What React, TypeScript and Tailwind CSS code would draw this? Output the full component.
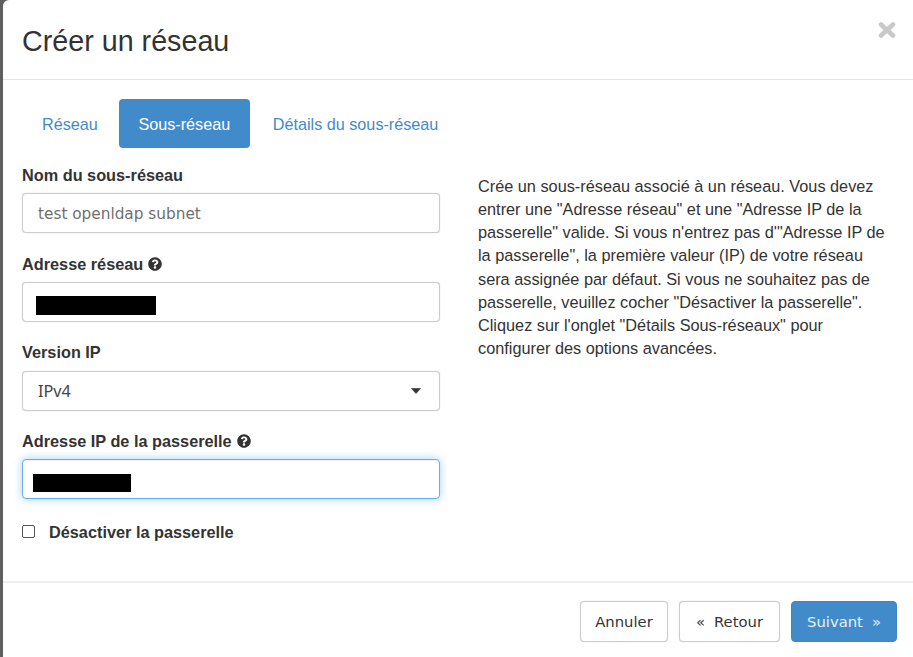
import React from "react";
import { FaQuestionCircle } from "react-icons/fa";

const labelCls = "block h-[22px] text-[16.3px] leading-[22px] font-bold text-[#333] font-['Liberation_Sans',sans-serif]";
const inputCls = "h-[40px] w-[418px] rounded-[4px] border border-[#ccc] shadow-[0_0_1px_rgba(0,0,0,0.25)] bg-white flex items-center font-['DejaVu_Sans',sans-serif] text-[15.3px]";

function Help() {
  return <FaQuestionCircle className="inline-block w-[14px] h-[14px] ml-[5px] align-[-1px] text-[#333]" />;
}

export default function App() {
  return (
    <div className="w-[913px] h-[657px] overflow-hidden bg-[#5f5f5f] pl-[3px]">
      <div className="w-[910px] h-[657px] bg-white rounded-tl-[6px] flex flex-col font-['Liberation_Sans',sans-serif] text-[#333]">
        <header className="relative h-[80px] shrink-0 border-b border-[#e5e5e5] pl-[19px] pr-[17px] flex items-center">
          <h1 className="text-[28.7px] leading-[36px] mt-[3px] text-[#333]">Créer un réseau</h1>
          <svg width="18" height="16" viewBox="0 0 18 16" className="absolute right-[17px] top-[22px] text-[#c9c9c9]">
            <path d="M3 2.5 L15 13.5 M15 2.5 L3 13.5" stroke="currentColor" strokeWidth="4.6" strokeLinecap="round" />
          </svg>
        </header>

        <div className="h-[501px] shrink-0 flex pl-[19px]">
          <div className="w-[419px] shrink-0">
            <nav className="pt-[19px] flex text-[16.2px] leading-[22px] w-[440px] whitespace-nowrap">
              <a className="h-[49px] px-[20px] flex items-center text-[#428bca]">Réseau</a>
              <a className="h-[49px] w-[131px] justify-center flex items-center bg-[#428bca] text-white rounded-[4px] ml-[1px]">Sous-réseau</a>
              <a className="h-[49px] px-[23px] flex items-center text-[#428bca]">Détails du sous-réseau</a>
            </nav>

            <form className="pt-[16px] flex flex-col">
              <label className={labelCls}>Nom du sous-réseau</label>
              <div className={inputCls + " mt-[7px] pl-[15px] pt-[2px] text-[#6f6f6f]"}>test openldap subnet</div>

              <label className={labelCls + " mt-[20px]"}>Adresse réseau<Help /></label>
              <div className={inputCls + " mt-[7px] pl-[13px]"}>
                <div className="w-[120px] h-[19px] bg-black mt-[7px]" />
              </div>

              <label className={labelCls + " mt-[19px]"}>Version IP</label>
              <div className={inputCls + " mt-[8px] pl-[15px] pr-[18px] justify-between text-[#444]"}>
                <span className="font-['Noto_Sans',sans-serif] text-[16.2px]">IPv4</span>
                <svg width="10" height="6" viewBox="0 0 10 6" className="text-[#333]">
                  <path d="M0.5 0.5h9L5 5.5z" fill="currentColor" stroke="currentColor" strokeWidth="0.6" strokeLinejoin="round" />
                </svg>
              </div>

              <label className={labelCls + " mt-[18px] pt-[1px]"}>Adresse IP de la passerelle<Help /></label>
              <div className="h-[40px] w-[418px] mt-[8px] pl-[10px] rounded-[4px] border border-[#66afe9] bg-white flex items-center shadow-[inset_0_1px_1px_rgba(0,0,0,0.075),0_0_8px_rgba(102,175,233,0.6)]">
                <div className="w-[98px] h-[18px] bg-black mt-[7px]" />
              </div>

              <div className="mt-[22px] h-[22px] flex items-center">
                <span className="w-[13px] h-[13px] rounded-[2px] border border-[#555] bg-white shrink-0 -mt-[2px]" />
                <span className="ml-[14px] text-[16.3px] font-bold leading-[22px]">Désactiver la passerelle</span>
              </div>
            </form>
          </div>

          <aside className="ml-[37px] pt-[95px] w-[420px] text-[16.3px] leading-[23.14px] text-[#333]">
            Crée un sous-réseau associé à un réseau. Vous devez<br />
            entrer une "Adresse réseau" et une "Adresse IP de la<br />
            passerelle" valide. Si vous n'entrez pas d'"Adresse IP de<br />
            la passerelle", la première valeur (IP) de votre réseau<br />
            sera assignée par défaut. Si vous ne souhaitez pas de<br />
            passerelle, veuillez cocher "Désactiver la passerelle".<br />
            Cliquez sur l'onglet "Détails Sous-réseaux" pour<br />
            configurer des options avancées.
          </aside>
        </div>

        <footer className="flex-1 border-t-2 border-[#eeeeee] pt-[18px] pr-[16px] flex justify-end gap-[11px] font-['DejaVu_Sans',sans-serif] text-[14.8px]">
          <button className="w-[88px] h-[41px] pt-[2px] ml-[1px] rounded-[4px] border border-[#ccc] shadow-[0_0_1px_rgba(0,0,0,0.25)] bg-white text-[#333]">Annuler</button>
          <button className="w-[101px] h-[41px] pt-[2px] rounded-[4px] border border-[#ccc] shadow-[0_0_1px_rgba(0,0,0,0.25)] bg-white text-[#333] flex items-center justify-center gap-[9px]"><span>«</span><span>Retour</span></button>
          <button className="w-[106px] h-[41px] pt-[2px] rounded-[4px] border border-[#3f86c4] bg-[#428bca] text-[#e8f0f8] flex items-center justify-center gap-[9px]"><span>Suivant</span><span>»</span></button>
        </footer>
      </div>
    </div>
  );
}
